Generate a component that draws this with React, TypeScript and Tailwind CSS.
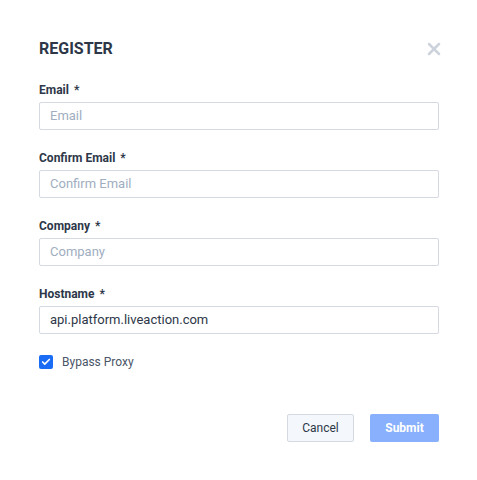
import { Check, X } from "lucide-react";

const fields = [
  { label: "Email", placeholder: "Email", value: "" },
  { label: "Confirm Email", placeholder: "Confirm Email", value: "" },
  { label: "Company", placeholder: "Company", value: "" },
  { label: "Hostname", placeholder: "Hostname", value: "api.platform.liveaction.com" },
];

const App = () => {
  return (
    <div className="w-[477px] h-[480px] bg-white" style={{ fontFamily: "Roboto, 'Liberation Sans', sans-serif" }}>
      <div className="pl-[39px] pr-[38px] pt-[39px]">
        <div className="flex items-center justify-between h-5">
          <h2 className="text-[16px] font-bold text-[#2d3748] leading-5">REGISTER</h2>
          <X size={20} strokeWidth={3} className="text-[#cdd3dc] mr-[-5px]" />
        </div>

        <div className="mt-[22px] flex flex-col gap-[19px]">
          {fields.map((f) => (
            <div key={f.label} className="flex flex-col">
              <label className="text-[12px] font-bold text-[#2d3748] leading-4 pt-[1px] mb-[4px]">
                {f.label}
                <span className="ml-[5px]">*</span>
              </label>
              <input
                readOnly
                defaultValue={f.value}
                placeholder={f.placeholder}
                className="h-[28px] w-[400px] border border-[#d5dae2] rounded-[2px] px-[10px] pb-[1px] text-[13px] text-[#2d3748] placeholder:text-[#a0aec0] outline-none"
              />
            </div>
          ))}
        </div>

        <div className="mt-[20px] flex items-center gap-[9px] h-4">
          <span className="w-[14px] h-[14px] rounded-[2px] bg-[#1a6cf5] flex items-center justify-center">
            <Check size={10} strokeWidth={4} className="text-white" />
          </span>
          <span className="text-[12px] text-[#4a5568]">Bypass Proxy</span>
        </div>

        <div className="mt-[44px] flex justify-end gap-[16px]">
          <button className="h-[28px] w-[67px] border border-[#d5dae2] bg-[#f4f7fb] rounded-[2px] text-[12px] text-[#2d3748]">
            Cancel
          </button>
          <button className="h-[28px] w-[69px] bg-[#88b0fd] rounded-[2px] text-[12px] font-bold text-white">
            Submit
          </button>
        </div>
      </div>
    </div>
  );
};

export default App;
